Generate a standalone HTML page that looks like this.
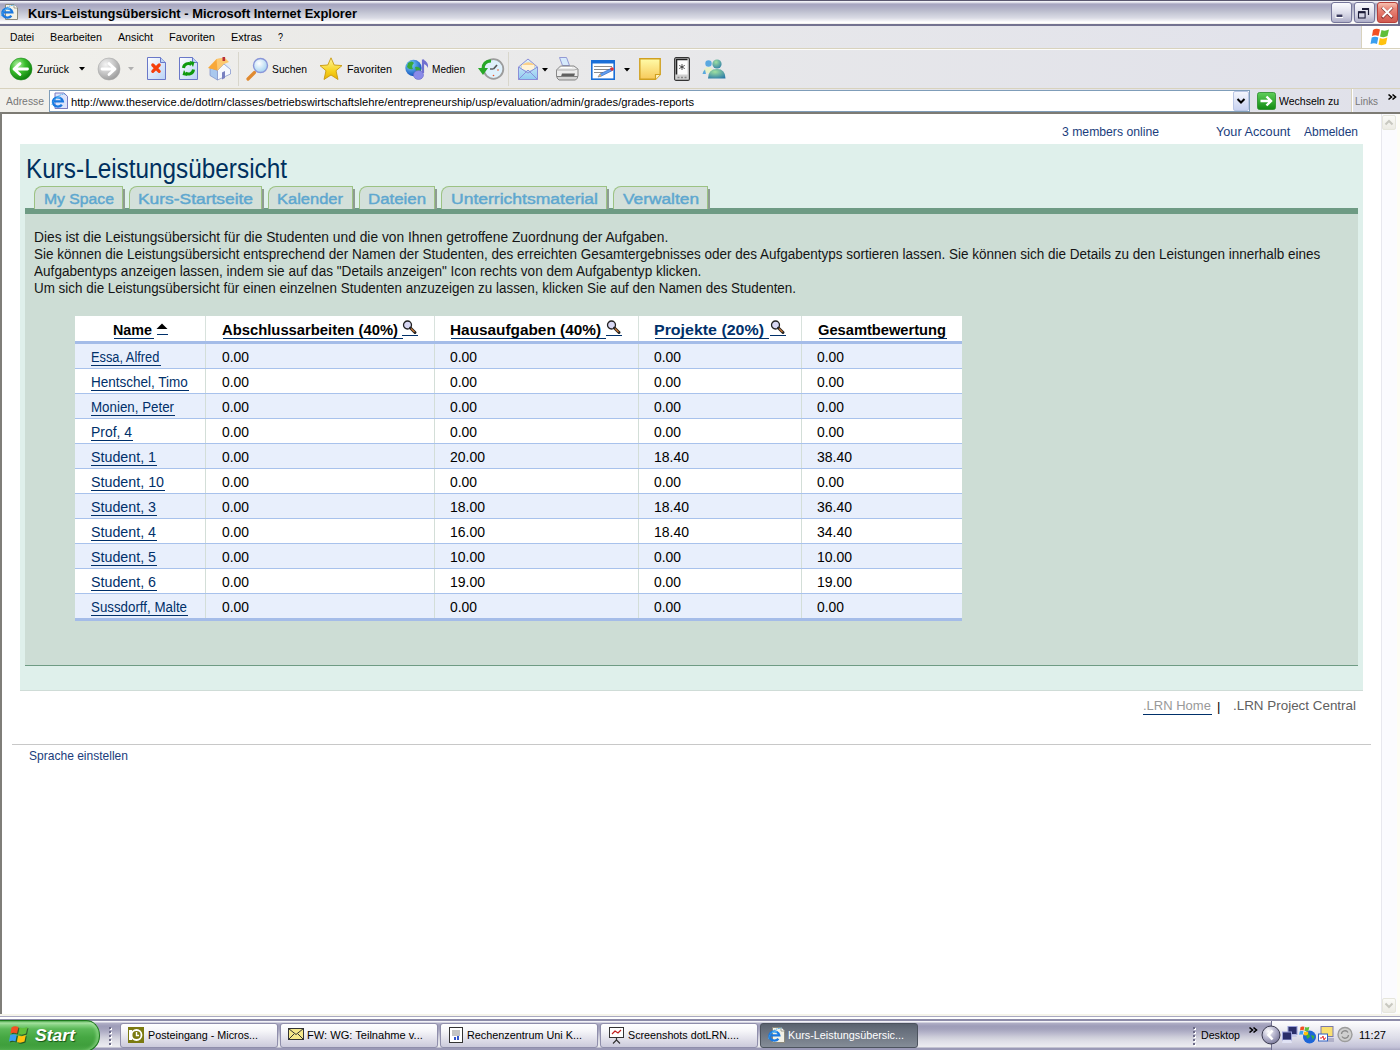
<!DOCTYPE html>
<html><head><meta charset="utf-8">
<title>Kurs-Leistungsübersicht</title>
<style>
*{margin:0;padding:0;box-sizing:border-box}
html,body{width:1400px;height:1050px;overflow:hidden;background:#fff;font-family:"Liberation Sans",sans-serif}
body{position:relative}
.a{position:absolute}
.t{position:absolute;white-space:nowrap}
svg{position:absolute;overflow:visible}
</style></head><body>
<div class="a" style="left:0;top:112px;width:1400px;height:904px;background:#fff"></div>
<div class="a" style="left:0;top:112px;width:1400px;height:2px;background:#7d7b74"></div>
<div class="a" style="left:0;top:112px;width:2px;height:904px;background:#7f7e79"></div>
<div class="a" style="left:20px;top:144px;width:1343px;height:547px;background:#dff0eb;border-bottom:1px solid #cfdcd7"></div>
<div class="a" style="left:25px;top:208px;width:1333px;height:6px;background:#6e9b84"></div>
<div class="a" style="left:25px;top:214px;width:1333px;height:452px;background:#cdddd5;border-bottom:1px solid #6e9b84"></div>
<div class="t" style="left:1062px;top:124.95px;font-size:13px;line-height:13px;color:#1a3d7c;transform:scaleX(0.9388);transform-origin:0 0;">3 members online</div>
<div class="t" style="left:1216px;top:124.95px;font-size:13px;line-height:13px;color:#1a3d7c;transform:scaleX(0.9759);transform-origin:0 0;">Your Account</div>
<div class="t" style="left:1304px;top:124.95px;font-size:13px;line-height:13px;color:#1a3d7c;transform:scaleX(0.9225);transform-origin:0 0;">Abmelden</div>
<div class="t" style="left:26px;top:154.62px;font-size:27.5px;line-height:27.5px;color:#00305f;transform:scaleX(0.8847);transform-origin:0 0;">Kurs-Leistungsübersicht</div>
<div class="a" style="left:34px;top:186px;width:89px;height:23px;background:#d3e0da;border:1px solid #9cc283;border-bottom:none;border-top-left-radius:8px"></div>
<div class="a" style="left:123px;top:189px;width:2px;height:20px;background:#8e9c92"></div>
<div class="t" style="left:44px;top:190.82px;font-size:15.5px;line-height:15.5px;color:#5ea7cf;transform:scaleX(1.0157);transform-origin:0 0;-webkit-text-stroke:0.45px #5ea7cf;">My Space</div>
<div class="a" style="left:129px;top:186px;width:133px;height:23px;background:#d3e0da;border:1px solid #9cc283;border-bottom:none;border-top-left-radius:8px"></div>
<div class="a" style="left:262px;top:189px;width:2px;height:20px;background:#8e9c92"></div>
<div class="t" style="left:138px;top:190.82px;font-size:15.5px;line-height:15.5px;color:#5ea7cf;transform:scaleX(1.1219);transform-origin:0 0;-webkit-text-stroke:0.45px #5ea7cf;">Kurs-Startseite</div>
<div class="a" style="left:268px;top:186px;width:85px;height:23px;background:#d3e0da;border:1px solid #9cc283;border-bottom:none;border-top-left-radius:8px"></div>
<div class="a" style="left:353px;top:189px;width:2px;height:20px;background:#8e9c92"></div>
<div class="t" style="left:277px;top:190.82px;font-size:15.5px;line-height:15.5px;color:#5ea7cf;transform:scaleX(1.0637);transform-origin:0 0;-webkit-text-stroke:0.45px #5ea7cf;">Kalender</div>
<div class="a" style="left:359px;top:186px;width:76px;height:23px;background:#d3e0da;border:1px solid #9cc283;border-bottom:none;border-top-left-radius:8px"></div>
<div class="a" style="left:435px;top:189px;width:2px;height:20px;background:#8e9c92"></div>
<div class="t" style="left:368px;top:190.82px;font-size:15.5px;line-height:15.5px;color:#5ea7cf;transform:scaleX(1.0856);transform-origin:0 0;-webkit-text-stroke:0.45px #5ea7cf;">Dateien</div>
<div class="a" style="left:441px;top:186px;width:166px;height:23px;background:#d3e0da;border:1px solid #9cc283;border-bottom:none;border-top-left-radius:8px"></div>
<div class="a" style="left:607px;top:189px;width:2px;height:20px;background:#8e9c92"></div>
<div class="t" style="left:451px;top:190.82px;font-size:15.5px;line-height:15.5px;color:#5ea7cf;transform:scaleX(1.1302);transform-origin:0 0;-webkit-text-stroke:0.45px #5ea7cf;">Unterrichtsmaterial</div>
<div class="a" style="left:613px;top:186px;width:95px;height:23px;background:#d3e0da;border:1px solid #9cc283;border-bottom:none;border-top-left-radius:8px"></div>
<div class="a" style="left:708px;top:189px;width:2px;height:20px;background:#8e9c92"></div>
<div class="t" style="left:623px;top:190.82px;font-size:15.5px;line-height:15.5px;color:#5ea7cf;transform:scaleX(1.1165);transform-origin:0 0;-webkit-text-stroke:0.45px #5ea7cf;">Verwalten</div>
<div class="t" style="left:34px;top:230.10px;font-size:14px;line-height:14px;color:#141414;transform:scaleX(0.9846);transform-origin:0 0;">Dies ist die Leistungsübersicht für die Studenten und die von Ihnen getroffene Zuordnung der Aufgaben.</div>
<div class="t" style="left:34px;top:247.10px;font-size:14px;line-height:14px;color:#141414;transform:scaleX(0.9637);transform-origin:0 0;">Sie können die Leistungsübersicht entsprechend der Namen der Studenten, des erreichten Gesamtergebnisses oder des Aufgabentyps sortieren lassen. Sie können sich die Details zu den Leistungen innerhalb eines</div>
<div class="t" style="left:34px;top:264.10px;font-size:14px;line-height:14px;color:#141414;transform:scaleX(0.9701);transform-origin:0 0;">Aufgabentyps anzeigen lassen, indem sie auf das &quot;Details anzeigen&quot; Icon rechts von dem Aufgabentyp klicken.</div>
<div class="t" style="left:34px;top:281.10px;font-size:14px;line-height:14px;color:#141414;transform:scaleX(0.9590);transform-origin:0 0;">Um sich die Leistungsübersicht für einen einzelnen Studenten anzuzeigen zu lassen, klicken Sie auf den Namen des Studenten.</div>
<div class="a" style="left:75px;top:316px;width:887px;height:25px;background:#fff"></div>
<div class="a" style="left:75px;top:341px;width:887px;height:3px;background:#a4bce8"></div>
<div class="a" style="left:75px;top:344px;width:887px;height:24px;background:#e8effc"></div>
<div class="a" style="left:75px;top:369px;width:887px;height:24px;background:#fff"></div>
<div class="a" style="left:75px;top:394px;width:887px;height:24px;background:#e8effc"></div>
<div class="a" style="left:75px;top:419px;width:887px;height:24px;background:#fff"></div>
<div class="a" style="left:75px;top:444px;width:887px;height:24px;background:#e8effc"></div>
<div class="a" style="left:75px;top:469px;width:887px;height:24px;background:#fff"></div>
<div class="a" style="left:75px;top:494px;width:887px;height:24px;background:#e8effc"></div>
<div class="a" style="left:75px;top:519px;width:887px;height:24px;background:#fff"></div>
<div class="a" style="left:75px;top:544px;width:887px;height:24px;background:#e8effc"></div>
<div class="a" style="left:75px;top:569px;width:887px;height:24px;background:#fff"></div>
<div class="a" style="left:75px;top:594px;width:887px;height:24px;background:#e8effc"></div>
<div class="a" style="left:205px;top:316px;width:1px;height:25px;background:#d8e2dd"></div>
<div class="a" style="left:205px;top:344px;width:1px;height:274px;background:#d3ded8"></div>
<div class="a" style="left:434px;top:316px;width:1px;height:25px;background:#d8e2dd"></div>
<div class="a" style="left:434px;top:344px;width:1px;height:274px;background:#d3ded8"></div>
<div class="a" style="left:638px;top:316px;width:1px;height:25px;background:#d8e2dd"></div>
<div class="a" style="left:638px;top:344px;width:1px;height:274px;background:#d3ded8"></div>
<div class="a" style="left:801px;top:316px;width:1px;height:25px;background:#d8e2dd"></div>
<div class="a" style="left:801px;top:344px;width:1px;height:274px;background:#d3ded8"></div>
<div class="a" style="left:75px;top:368px;width:887px;height:1px;background:#a8c2ec"></div>
<div class="a" style="left:75px;top:393px;width:887px;height:1px;background:#a8c2ec"></div>
<div class="a" style="left:75px;top:418px;width:887px;height:1px;background:#a8c2ec"></div>
<div class="a" style="left:75px;top:443px;width:887px;height:1px;background:#a8c2ec"></div>
<div class="a" style="left:75px;top:468px;width:887px;height:1px;background:#a8c2ec"></div>
<div class="a" style="left:75px;top:493px;width:887px;height:1px;background:#a8c2ec"></div>
<div class="a" style="left:75px;top:518px;width:887px;height:1px;background:#a8c2ec"></div>
<div class="a" style="left:75px;top:543px;width:887px;height:1px;background:#a8c2ec"></div>
<div class="a" style="left:75px;top:568px;width:887px;height:1px;background:#a8c2ec"></div>
<div class="a" style="left:75px;top:593px;width:887px;height:1px;background:#a8c2ec"></div>
<div class="a" style="left:75px;top:618px;width:887px;height:3px;background:#a4bce8"></div>
<div class="t" style="left:91px;top:350.10px;font-size:14px;line-height:14px;color:#00306a;transform:scaleX(0.9142);transform-origin:0 0;">Essa, Alfred</div>
<div class="a" style="left:91px;top:365px;width:70px;height:1px;background:#00306a"></div>
<div class="t" style="left:222px;top:350.10px;font-size:14px;line-height:14px;color:#000;transform:scaleX(0.9909);transform-origin:0 0;">0.00</div>
<div class="t" style="left:450px;top:350.10px;font-size:14px;line-height:14px;color:#000;transform:scaleX(0.9909);transform-origin:0 0;">0.00</div>
<div class="t" style="left:654px;top:350.10px;font-size:14px;line-height:14px;color:#000;transform:scaleX(0.9909);transform-origin:0 0;">0.00</div>
<div class="t" style="left:817px;top:350.10px;font-size:14px;line-height:14px;color:#000;transform:scaleX(0.9909);transform-origin:0 0;">0.00</div>
<div class="t" style="left:91px;top:375.10px;font-size:14px;line-height:14px;color:#00306a;transform:scaleX(0.9640);transform-origin:0 0;">Hentschel, Timo</div>
<div class="a" style="left:91px;top:390px;width:98px;height:1px;background:#00306a"></div>
<div class="t" style="left:222px;top:375.10px;font-size:14px;line-height:14px;color:#000;transform:scaleX(0.9909);transform-origin:0 0;">0.00</div>
<div class="t" style="left:450px;top:375.10px;font-size:14px;line-height:14px;color:#000;transform:scaleX(0.9909);transform-origin:0 0;">0.00</div>
<div class="t" style="left:654px;top:375.10px;font-size:14px;line-height:14px;color:#000;transform:scaleX(0.9909);transform-origin:0 0;">0.00</div>
<div class="t" style="left:817px;top:375.10px;font-size:14px;line-height:14px;color:#000;transform:scaleX(0.9909);transform-origin:0 0;">0.00</div>
<div class="t" style="left:91px;top:400.10px;font-size:14px;line-height:14px;color:#00306a;transform:scaleX(0.9523);transform-origin:0 0;">Monien, Peter</div>
<div class="a" style="left:91px;top:415px;width:84px;height:1px;background:#00306a"></div>
<div class="t" style="left:222px;top:400.10px;font-size:14px;line-height:14px;color:#000;transform:scaleX(0.9909);transform-origin:0 0;">0.00</div>
<div class="t" style="left:450px;top:400.10px;font-size:14px;line-height:14px;color:#000;transform:scaleX(0.9909);transform-origin:0 0;">0.00</div>
<div class="t" style="left:654px;top:400.10px;font-size:14px;line-height:14px;color:#000;transform:scaleX(0.9909);transform-origin:0 0;">0.00</div>
<div class="t" style="left:817px;top:400.10px;font-size:14px;line-height:14px;color:#000;transform:scaleX(0.9909);transform-origin:0 0;">0.00</div>
<div class="t" style="left:91px;top:425.10px;font-size:14px;line-height:14px;color:#00306a;transform:scaleX(0.9942);transform-origin:0 0;">Prof, 4</div>
<div class="a" style="left:91px;top:440px;width:42px;height:1px;background:#00306a"></div>
<div class="t" style="left:222px;top:425.10px;font-size:14px;line-height:14px;color:#000;transform:scaleX(0.9909);transform-origin:0 0;">0.00</div>
<div class="t" style="left:450px;top:425.10px;font-size:14px;line-height:14px;color:#000;transform:scaleX(0.9909);transform-origin:0 0;">0.00</div>
<div class="t" style="left:654px;top:425.10px;font-size:14px;line-height:14px;color:#000;transform:scaleX(0.9909);transform-origin:0 0;">0.00</div>
<div class="t" style="left:817px;top:425.10px;font-size:14px;line-height:14px;color:#000;transform:scaleX(0.9909);transform-origin:0 0;">0.00</div>
<div class="t" style="left:91px;top:450.10px;font-size:14px;line-height:14px;color:#00306a;transform:scaleX(1.0184);transform-origin:0 0;">Student, 1</div>
<div class="a" style="left:91px;top:465px;width:66px;height:1px;background:#00306a"></div>
<div class="t" style="left:222px;top:450.10px;font-size:14px;line-height:14px;color:#000;transform:scaleX(0.9909);transform-origin:0 0;">0.00</div>
<div class="t" style="left:450px;top:450.10px;font-size:14px;line-height:14px;color:#000;">20.00</div>
<div class="t" style="left:654px;top:450.10px;font-size:14px;line-height:14px;color:#000;">18.40</div>
<div class="t" style="left:817px;top:450.10px;font-size:14px;line-height:14px;color:#000;">38.40</div>
<div class="t" style="left:91px;top:475.10px;font-size:14px;line-height:14px;color:#00306a;transform:scaleX(1.0194);transform-origin:0 0;">Student, 10</div>
<div class="a" style="left:91px;top:490px;width:74px;height:1px;background:#00306a"></div>
<div class="t" style="left:222px;top:475.10px;font-size:14px;line-height:14px;color:#000;transform:scaleX(0.9909);transform-origin:0 0;">0.00</div>
<div class="t" style="left:450px;top:475.10px;font-size:14px;line-height:14px;color:#000;transform:scaleX(0.9909);transform-origin:0 0;">0.00</div>
<div class="t" style="left:654px;top:475.10px;font-size:14px;line-height:14px;color:#000;transform:scaleX(0.9909);transform-origin:0 0;">0.00</div>
<div class="t" style="left:817px;top:475.10px;font-size:14px;line-height:14px;color:#000;transform:scaleX(0.9909);transform-origin:0 0;">0.00</div>
<div class="t" style="left:91px;top:500.10px;font-size:14px;line-height:14px;color:#00306a;transform:scaleX(1.0184);transform-origin:0 0;">Student, 3</div>
<div class="a" style="left:91px;top:515px;width:66px;height:1px;background:#00306a"></div>
<div class="t" style="left:222px;top:500.10px;font-size:14px;line-height:14px;color:#000;transform:scaleX(0.9909);transform-origin:0 0;">0.00</div>
<div class="t" style="left:450px;top:500.10px;font-size:14px;line-height:14px;color:#000;">18.00</div>
<div class="t" style="left:654px;top:500.10px;font-size:14px;line-height:14px;color:#000;">18.40</div>
<div class="t" style="left:817px;top:500.10px;font-size:14px;line-height:14px;color:#000;">36.40</div>
<div class="t" style="left:91px;top:525.10px;font-size:14px;line-height:14px;color:#00306a;transform:scaleX(1.0184);transform-origin:0 0;">Student, 4</div>
<div class="a" style="left:91px;top:540px;width:66px;height:1px;background:#00306a"></div>
<div class="t" style="left:222px;top:525.10px;font-size:14px;line-height:14px;color:#000;transform:scaleX(0.9909);transform-origin:0 0;">0.00</div>
<div class="t" style="left:450px;top:525.10px;font-size:14px;line-height:14px;color:#000;">16.00</div>
<div class="t" style="left:654px;top:525.10px;font-size:14px;line-height:14px;color:#000;">18.40</div>
<div class="t" style="left:817px;top:525.10px;font-size:14px;line-height:14px;color:#000;">34.40</div>
<div class="t" style="left:91px;top:550.10px;font-size:14px;line-height:14px;color:#00306a;transform:scaleX(1.0184);transform-origin:0 0;">Student, 5</div>
<div class="a" style="left:91px;top:565px;width:66px;height:1px;background:#00306a"></div>
<div class="t" style="left:222px;top:550.10px;font-size:14px;line-height:14px;color:#000;transform:scaleX(0.9909);transform-origin:0 0;">0.00</div>
<div class="t" style="left:450px;top:550.10px;font-size:14px;line-height:14px;color:#000;">10.00</div>
<div class="t" style="left:654px;top:550.10px;font-size:14px;line-height:14px;color:#000;transform:scaleX(0.9909);transform-origin:0 0;">0.00</div>
<div class="t" style="left:817px;top:550.10px;font-size:14px;line-height:14px;color:#000;">10.00</div>
<div class="t" style="left:91px;top:575.10px;font-size:14px;line-height:14px;color:#00306a;transform:scaleX(1.0184);transform-origin:0 0;">Student, 6</div>
<div class="a" style="left:91px;top:590px;width:66px;height:1px;background:#00306a"></div>
<div class="t" style="left:222px;top:575.10px;font-size:14px;line-height:14px;color:#000;transform:scaleX(0.9909);transform-origin:0 0;">0.00</div>
<div class="t" style="left:450px;top:575.10px;font-size:14px;line-height:14px;color:#000;">19.00</div>
<div class="t" style="left:654px;top:575.10px;font-size:14px;line-height:14px;color:#000;transform:scaleX(0.9909);transform-origin:0 0;">0.00</div>
<div class="t" style="left:817px;top:575.10px;font-size:14px;line-height:14px;color:#000;">19.00</div>
<div class="t" style="left:91px;top:600.10px;font-size:14px;line-height:14px;color:#00306a;transform:scaleX(0.9515);transform-origin:0 0;">Sussdorff, Malte</div>
<div class="a" style="left:91px;top:615px;width:97px;height:1px;background:#00306a"></div>
<div class="t" style="left:222px;top:600.10px;font-size:14px;line-height:14px;color:#000;transform:scaleX(0.9909);transform-origin:0 0;">0.00</div>
<div class="t" style="left:450px;top:600.10px;font-size:14px;line-height:14px;color:#000;transform:scaleX(0.9909);transform-origin:0 0;">0.00</div>
<div class="t" style="left:654px;top:600.10px;font-size:14px;line-height:14px;color:#000;transform:scaleX(0.9909);transform-origin:0 0;">0.00</div>
<div class="t" style="left:817px;top:600.10px;font-size:14px;line-height:14px;color:#000;transform:scaleX(0.9909);transform-origin:0 0;">0.00</div>
<div class="t" style="left:113px;top:323.10px;font-size:14px;line-height:14px;color:#000;font-weight:bold;transform:scaleX(1.0228);transform-origin:0 0;">Name</div>
<div class="a" style="left:114px;top:338px;width:40px;height:1px;background:#00306a"></div>
<svg style="left:157px;top:323px" width="11" height="13" viewBox="0 0 11 13"><path d="M5 0.5 L10.5 6 H-0.5 Z" fill="#000"/><rect x="0" y="11" width="11" height="1" fill="#00306a"/></svg>
<div class="t" style="left:222px;top:323.10px;font-size:14px;line-height:14px;color:#000;font-weight:bold;transform:scaleX(1.0571);transform-origin:0 0;">Abschlussarbeiten (40%)</div>
<div class="a" style="left:223px;top:338px;width:180px;height:1px;background:#00306a"></div>
<svg style="left:402px;top:320px" width="16" height="16" viewBox="0 0 16 16"><circle cx="5.5" cy="5" r="4" fill="#d8d8f4" stroke="#222" stroke-width="1.3"/><path d="M8.5 8 L13 12.5" stroke="#222" stroke-width="3" stroke-linecap="round"/><path d="M9 8.5 L12.5 12" stroke="#c07030" stroke-width="1.4"/><rect x="0" y="15" width="16" height="1" fill="#00306a"/></svg>
<div class="t" style="left:450px;top:323.10px;font-size:14px;line-height:14px;color:#000;font-weight:bold;transform:scaleX(1.0966);transform-origin:0 0;">Hausaufgaben (40%)</div>
<div class="a" style="left:451px;top:338px;width:155px;height:1px;background:#00306a"></div>
<svg style="left:606px;top:320px" width="16" height="16" viewBox="0 0 16 16"><circle cx="5.5" cy="5" r="4" fill="#d8d8f4" stroke="#222" stroke-width="1.3"/><path d="M8.5 8 L13 12.5" stroke="#222" stroke-width="3" stroke-linecap="round"/><path d="M9 8.5 L12.5 12" stroke="#c07030" stroke-width="1.4"/><rect x="0" y="15" width="16" height="1" fill="#00306a"/></svg>
<div class="t" style="left:654px;top:323.10px;font-size:14px;line-height:14px;color:#00306a;font-weight:bold;transform:scaleX(1.1401);transform-origin:0 0;">Projekte (20%)</div>
<div class="a" style="left:655px;top:338px;width:114px;height:1px;background:#00306a"></div>
<svg style="left:770px;top:320px" width="16" height="16" viewBox="0 0 16 16"><circle cx="5.5" cy="5" r="4" fill="#d8d8f4" stroke="#222" stroke-width="1.3"/><path d="M8.5 8 L13 12.5" stroke="#222" stroke-width="3" stroke-linecap="round"/><path d="M9 8.5 L12.5 12" stroke="#c07030" stroke-width="1.4"/><rect x="0" y="15" width="16" height="1" fill="#00306a"/></svg>
<div class="t" style="left:818px;top:323.10px;font-size:14px;line-height:14px;color:#000;font-weight:bold;transform:scaleX(1.0480);transform-origin:0 0;">Gesamtbewertung</div>
<div class="a" style="left:819px;top:338px;width:128px;height:1px;background:#00306a"></div>
<div class="t" style="left:1143px;top:698.95px;font-size:13px;line-height:13px;color:#999;">.LRN Home</div>
<div class="a" style="left:1143px;top:714px;width:69px;height:1px;background:#00306a"></div>
<div class="t" style="left:1217px;top:699.95px;font-size:13px;line-height:13px;color:#000;">|</div>
<div class="t" style="left:1233px;top:698.95px;font-size:13px;line-height:13px;color:#606060;transform:scaleX(1.0318);transform-origin:0 0;">.LRN Project Central</div>
<div class="a" style="left:12px;top:744px;width:1359px;height:1px;background:#c8c8c8"></div>
<div class="t" style="left:29px;top:748.95px;font-size:13px;line-height:13px;color:#1a3d7c;transform:scaleX(0.9256);transform-origin:0 0;">Sprache einstellen</div>
<div class="a" style="left:1381px;top:114px;width:17px;height:900px;background:#fbfbfe;border-left:1px solid #e8e8ee;border-right:1px solid #ebebf0"></div>
<div class="a" style="left:1397px;top:114px;width:3px;height:902px;background:#fdfdf5"></div>
<div class="a" style="left:0px;top:1014px;width:1400px;height:2px;background:#f5f4ea"></div>
<div class="a" style="left:0;top:0;width:1400px;height:26px;background:linear-gradient(#5a5870 0,#5a5870 1px,#f0f0f6 1px,#f0f0f6 2px,#a6a5c0 4px,#aaa9c3 6px,#b8b9cb 10px,#c9cbd8 14px,#dadbe5 18px,#f4f4f7 21px,#fff 22px,#fff 23px,#e8e6e0 24px,#737290 24px,#737290 26px)"></div>
<div class="a" style="left:1398px;top:0;width:2px;height:26px;background:#6a6988"></div>
<div class="t" style="left:28px;top:6.95px;font-size:13px;line-height:13px;color:#000;font-weight:bold;transform:scaleX(0.9923);transform-origin:0 0;">Kurs-Leistungsübersicht - Microsoft Internet Explorer</div>
<div class="a" style="left:0;top:26px;width:1361px;height:22px;background:linear-gradient(90deg,#eeede6,#e9e9ea 40%,#e1e2eb)"></div>
<div class="a" style="left:1361px;top:26px;width:39px;height:22px;background:#fff;border-left:1px solid #d8d2bd"></div>
<div class="a" style="left:0;top:48px;width:1400px;height:1px;background:#d8d2bd"></div>
<div class="t" style="left:10px;top:31.65px;font-size:11px;line-height:11px;color:#000;transform:scaleX(0.9346);transform-origin:0 0;">Datei</div>
<div class="t" style="left:50px;top:31.65px;font-size:11px;line-height:11px;color:#000;transform:scaleX(0.9773);transform-origin:0 0;">Bearbeiten</div>
<div class="t" style="left:118px;top:31.65px;font-size:11px;line-height:11px;color:#000;transform:scaleX(0.9703);transform-origin:0 0;">Ansicht</div>
<div class="t" style="left:169px;top:31.65px;font-size:11px;line-height:11px;color:#000;transform:scaleX(1.0032);transform-origin:0 0;">Favoriten</div>
<div class="t" style="left:231px;top:31.65px;font-size:11px;line-height:11px;color:#000;transform:scaleX(0.9944);transform-origin:0 0;">Extras</div>
<div class="t" style="left:278px;top:31.65px;font-size:11px;line-height:11px;color:#000;transform:scaleX(0.8173);transform-origin:0 0;">?</div>
<div class="a" style="left:0;top:49px;width:1400px;height:39px;background:linear-gradient(90deg,#f1f0eb,#e9e9ea 40%,#e0e1ea)"></div>
<div class="a" style="left:0;top:88px;width:1400px;height:1px;background:#d8d2bd"></div>
<div class="a" style="left:0;top:49px;width:1400px;height:1px;background:#fdfdfb"></div>
<div class="t" style="left:37px;top:63.65px;font-size:11px;line-height:11px;color:#000;transform:scaleX(0.9519);transform-origin:0 0;">Zurück</div>
<div class="t" style="left:272px;top:63.65px;font-size:11px;line-height:11px;color:#000;transform:scaleX(0.9381);transform-origin:0 0;">Suchen</div>
<div class="t" style="left:347px;top:63.65px;font-size:11px;line-height:11px;color:#000;transform:scaleX(0.9814);transform-origin:0 0;">Favoriten</div>
<div class="t" style="left:432px;top:63.65px;font-size:11px;line-height:11px;color:#000;transform:scaleX(0.9147);transform-origin:0 0;">Medien</div>
<div class="a" style="left:0;top:89px;width:1400px;height:23px;background:linear-gradient(90deg,#f1f0eb,#e9e9ea 40%,#e0e1ea)"></div>
<div class="t" style="left:6px;top:95.65px;font-size:11px;line-height:11px;color:#777;transform:scaleX(0.9417);transform-origin:0 0;">Adresse</div>
<div class="a" style="left:49px;top:90px;width:1201px;height:22px;background:#fff;border:1px solid #7f9db9"></div>
<div class="t" style="left:71px;top:96.65px;font-size:11px;line-height:11px;color:#000;transform:scaleX(1.0169);transform-origin:0 0;">http://www.theservice.de/dotlrn/classes/betriebswirtschaftslehre/entrepreneurship/usp/evaluation/admin/grades/grades-reports</div>
<div class="t" style="left:1279px;top:95.65px;font-size:11px;line-height:11px;color:#000;transform:scaleX(0.9558);transform-origin:0 0;">Wechseln zu</div>
<div class="t" style="left:1355px;top:95.65px;font-size:11px;line-height:11px;color:#777;transform:scaleX(0.8957);transform-origin:0 0;">Links</div>
<div class="a" style="left:0;top:1016px;width:1400px;height:34px;background:linear-gradient(#a9a8c0 0,#a9a8c0 1px,#fff 1px,#fff 3px,#8d8ca9 3px,#8d8ca9 5px,#f4f4f8 5px,#f4f4f8 6px,#b0afc6 7px,#9e9db9 10px,#a3a2bc 13px,#b7b6cb 17px,#cdcdd9 21px,#dedee6 25px,#e8e8ee 29px,#ececee 31px,#9a99b6 32px,#9a99b6 34px)"></div>
<svg width="0" height="0" style="position:absolute"><defs>
<radialGradient id="gGreen" cx="0.35" cy="0.3" r="0.75"><stop offset="0" stop-color="#b6f0a8"/><stop offset="0.45" stop-color="#3cbf2e"/><stop offset="1" stop-color="#0b7d0b"/></radialGradient>
<radialGradient id="gGray" cx="0.35" cy="0.3" r="0.75"><stop offset="0" stop-color="#f4f4f4"/><stop offset="0.5" stop-color="#c9c9c9"/><stop offset="1" stop-color="#9a9a9a"/></radialGradient>
<linearGradient id="gPage" x1="0" y1="0" x2="1" y2="1"><stop offset="0" stop-color="#ffffff"/><stop offset="1" stop-color="#b9d3f6"/></linearGradient>
<radialGradient id="gLens" cx="0.4" cy="0.35" r="0.7"><stop offset="0" stop-color="#ffffff"/><stop offset="1" stop-color="#9fd0f0"/></radialGradient>
<linearGradient id="gStar" x1="0" y1="0" x2="0" y2="1"><stop offset="0" stop-color="#fff7a0"/><stop offset="0.6" stop-color="#f7d320"/><stop offset="1" stop-color="#e8b000"/></linearGradient>
<radialGradient id="gGlobe" cx="0.35" cy="0.3" r="0.75"><stop offset="0" stop-color="#7fd6ff"/><stop offset="1" stop-color="#0a48b8"/></radialGradient>
<linearGradient id="gNote" x1="0" y1="0" x2="0" y2="1"><stop offset="0" stop-color="#fffca8"/><stop offset="1" stop-color="#f7c95a"/></linearGradient>
<linearGradient id="gEnv" x1="0" y1="0" x2="0" y2="1"><stop offset="0" stop-color="#e2f2fb"/><stop offset="1" stop-color="#8ecbf0"/></linearGradient>
<linearGradient id="gGo" x1="0" y1="0" x2="0" y2="1"><stop offset="0" stop-color="#5fcf5a"/><stop offset="1" stop-color="#118a11"/></linearGradient>
<linearGradient id="gStart" x1="0" y1="0" x2="0" y2="1"><stop offset="0" stop-color="#4fa84f"/><stop offset="0.1" stop-color="#a4dba2"/><stop offset="0.3" stop-color="#5ebb5a"/><stop offset="0.7" stop-color="#3a9a38"/><stop offset="1" stop-color="#2f8a2d"/></linearGradient>
<radialGradient id="gPerson" cx="0.4" cy="0.3" r="0.8"><stop offset="0" stop-color="#9fe0a0"/><stop offset="1" stop-color="#2a7aa8"/></radialGradient>
</defs></svg>
<svg style="left:9px;top:58px" width="24" height="24" viewBox="0 0 24 24"><circle cx="12" cy="11" r="11" fill="url(#gGreen)" stroke="#1d8a1d" stroke-width="0.6"/><path d="M5 11 L11 5.5 M5 11 L11 16.5 M5.5 11 H18.5" stroke="#fff" stroke-width="2.8" stroke-linecap="round" fill="none"/></svg>
<svg style="left:79px;top:67px" width="6" height="4" viewBox="0 0 6 4"><path d="M0 0 H6 L3 3.5 Z" fill="#000"/></svg>
<svg style="left:98px;top:58px" width="24" height="24" viewBox="0 0 24 24"><circle cx="11" cy="11" r="11" fill="url(#gGray)" stroke="#a8a8a8" stroke-width="0.6"/><path d="M17 11 L11 5.5 M17 11 L11 16.5 M16.5 11 H4" stroke="#fff" stroke-width="2.8" stroke-linecap="round" fill="none"/></svg>
<svg style="left:128px;top:67px" width="6" height="4" viewBox="0 0 6 4"><path d="M0 0 H6 L3 3.5 Z" fill="#b0b0b0"/></svg>
<svg style="left:147px;top:57px" width="20" height="24" viewBox="0 0 20 24"><path d="M0.5 0.5 H13.5 L18.5 5.5 V22.5 H0.5 Z" fill="url(#gPage)" stroke="#6a78c8" stroke-width="1"/><path d="M13.5 0.5 V5.5 H18.5" fill="#bcd4f5" stroke="#6a78c8" stroke-width="1"/><path d="M5.8 8 L12.2 14.4 M12.2 8 L5.8 14.4" stroke="#f5400e" stroke-width="3.2" stroke-linecap="round"/></svg>
<svg style="left:179px;top:57px" width="20" height="24" viewBox="0 0 20 24"><path d="M0.5 0.5 H13.5 L18.5 5.5 V22.5 H0.5 Z" fill="url(#gPage)" stroke="#6a78c8" stroke-width="1"/><path d="M13.5 0.5 V5.5 H18.5" fill="#bcd4f5" stroke="#6a78c8" stroke-width="1"/><path d="M4.5 11 A5 5 0 0 1 12.5 7.5" stroke="#0f9a0f" stroke-width="3" fill="none"/><path d="M10.5 4 L15.5 5 L14 10 Z" fill="#0f9a0f"/><path d="M14.5 12.5 A5 5 0 0 1 6.5 16" stroke="#0f9a0f" stroke-width="3" fill="none"/><path d="M8.5 19 L3.5 18 L5 13 Z" fill="#0f9a0f"/></svg>
<svg style="left:208px;top:57px" width="24" height="24" viewBox="0 0 24 24"><path d="M2 10.5 V18.5 L9.5 23 L22.5 17 V9.5 L15 3 Z" fill="#dfe9f8"/><path d="M2 10.5 V18.5 L9.5 23 V13.5 Z" fill="#a9c8ee" stroke="#7b8ec8" stroke-width="0.7"/><path d="M9.5 13.5 L16 7 L22.5 12.5 V17 L9.5 23 Z" fill="#f6f9fe" stroke="#7b8ec8" stroke-width="0.7"/><path d="M0 11 L8.5 2 L17 1 L9.5 13.5 Z" fill="#f8a838"/><path d="M8.5 2 L17 1 L21 5 L16 7 L9.5 13.5 Z" fill="#fcc870"/><rect x="14.5" y="0" width="2.6" height="4" fill="#b83038"/><path d="M14 15.5 L17 14 V21 L14 22.5 Z" fill="#7880c0"/></svg>
<div class="a" style="left:238px;top:52px;width:1px;height:34px;background:#d8d6cc"></div>
<svg style="left:245px;top:57px" width="24" height="24" viewBox="0 0 24 24"><path d="M3 22 L9.5 15.5" stroke="#e08a30" stroke-width="3.2" stroke-linecap="round"/><circle cx="15.5" cy="8.5" r="7" fill="url(#gLens)" stroke="#8a96d8" stroke-width="1.4"/></svg>
<svg style="left:319px;top:57px" width="24" height="24" viewBox="0 0 24 24"><path d="M12 0.8 L15.2 8 L23 8.6 L17 13.7 L19 22.5 L12 18 L5 22.5 L7 13.7 L1 8.6 L8.8 8 Z" fill="url(#gStar)" stroke="#c89a10" stroke-width="0.9" stroke-linejoin="round"/></svg>
<svg style="left:404px;top:58px" width="26" height="24" viewBox="0 0 26 24"><circle cx="9.5" cy="10" r="8.2" fill="url(#gGlobe)"/><path d="M4 5 Q8 2 10 5 Q7 8 9 11 Q5 12 3 9 Z M11 9 Q15 8 17 12 Q14 14 12 13 Z" fill="#3aa83a"/><path d="M19 1.5 V15" stroke="#7070d0" stroke-width="2.2"/><path d="M19 1.5 Q25 4 24 10 Q22 6 19 6 Z" fill="#7070d0"/><ellipse cx="14.5" cy="17" rx="5" ry="4.5" fill="#8a8ae8" stroke="#6a6ac8" stroke-width="0.6"/></svg>
<svg style="left:477px;top:58px" width="26" height="24" viewBox="0 0 26 24"><circle cx="16.5" cy="11" r="9.8" fill="#dff0fb" stroke="#9c9c9c" stroke-width="1.8"/><path d="M16.5 11 L20 7" stroke="#555" stroke-width="1.6"/><path d="M16.5 11 H13" stroke="#555" stroke-width="1.4"/><circle cx="21" cy="12" r="0.8" fill="#f05020"/><circle cx="16.5" cy="17.5" r="0.8" fill="#f05020"/><path d="M14 3 Q6 3 6 11" stroke="#27a827" stroke-width="3" fill="none"/><path d="M1 10 L11 10 L6 17 Z" fill="#27a827"/></svg>
<div class="a" style="left:508px;top:52px;width:1px;height:34px;background:#d8d6cc"></div>
<svg style="left:518px;top:58px" width="21" height="23" viewBox="0 0 21 23"><path d="M0.5 9 L10 1 L19.5 9 V21.5 H0.5 Z" fill="url(#gEnv)" stroke="#8a8ed8" stroke-width="1"/><path d="M3 8 Q10 1 17 7 L16 10 L4 10 Z" fill="#fbd08a"/><path d="M4 7 H16 V11 L10 13 L4 11 Z" fill="#fff3d8"/><path d="M0.5 21.5 L10 12 L19.5 21.5 M0.5 9 L10 15 L19.5 9" stroke="#8a8ed8" stroke-width="1" fill="none"/></svg>
<svg style="left:542px;top:68px" width="6" height="4" viewBox="0 0 6 4"><path d="M0 0 H6 L3 3.5 Z" fill="#000"/></svg>
<svg style="left:556px;top:57px" width="23" height="24" viewBox="0 0 23 24"><path d="M3.5 0.5 H10.5 L13.5 8.5 H6.5 Z" fill="#d6eafc" stroke="#8a90d0" stroke-width="0.9"/><path d="M0.5 13 L4.5 9 H18 L22 12 V19.5 H0.5 Z" fill="#ececec" stroke="#7c7c7c" stroke-width="0.9"/><path d="M0.5 13 H18 L22 12" stroke="#a8a8a8" stroke-width="0.9" fill="none"/><path d="M5 10.5 H16" stroke="#fff" stroke-width="1"/><path d="M6 16.5 H19 L18 19.5 H5 Z" fill="#5f5f5f"/><path d="M1 19.5 H21.5 V21 L19.5 23 H3 L1 21 Z" fill="#d4d4d4" stroke="#7c7c7c" stroke-width="0.9"/></svg>
<svg style="left:591px;top:60px" width="24" height="20" viewBox="0 0 24 20"><rect x="0.8" y="0.8" width="22.4" height="18.4" fill="#fff" stroke="#1a6fd8" stroke-width="1.6"/><rect x="0" y="0" width="24" height="3.5" fill="#1a6fd8"/><path d="M3 6.5 H21 M3 9.5 H21 M3 12.5 H12" stroke="#7f7f7f" stroke-width="0.9"/><path d="M7 17 L9 14 L20 8.5 L21.5 10.5 L10.5 16 Z" fill="#5fa0f0" stroke="#2a5ab8" stroke-width="0.6"/><circle cx="21" cy="9" r="1.8" fill="#e03030"/><path d="M7 17 L9 14 L10.5 16 Z" fill="#e8b060"/></svg>
<svg style="left:624px;top:68px" width="6" height="4" viewBox="0 0 6 4"><path d="M0 0 H6 L3 3.5 Z" fill="#000"/></svg>
<svg style="left:639px;top:58px" width="23" height="23" viewBox="0 0 23 23"><path d="M0.8 0.8 H21.2 V16.5 L16.5 21.2 H0.8 Z" fill="url(#gNote)" stroke="#d0a020" stroke-width="1.4"/><path d="M16.5 21.2 V16.5 H21.2" fill="#fff6c8" stroke="#d0a020" stroke-width="1.2"/></svg>
<svg style="left:674px;top:57px" width="16" height="24" viewBox="0 0 16 24"><rect x="0.6" y="0.6" width="14.8" height="22.8" rx="1.5" fill="#d0d0d0" stroke="#333" stroke-width="1.1"/><rect x="2.5" y="2.5" width="11" height="15" fill="#fdfdfd"/><path d="M2.5 17.5 V2.5 H13.5" stroke="#222" stroke-width="1.6" fill="none"/><path d="M8 7 V13 M5.2 8.4 L10.8 11.6 M5.2 11.6 L10.8 8.4" stroke="#222" stroke-width="0.75"/><path d="M3.5 20.5 H12.5" stroke="#888" stroke-width="1.6" stroke-dasharray="2 1.5"/></svg>
<svg style="left:702px;top:59px" width="24" height="20" viewBox="0 0 24 20"><circle cx="6.5" cy="4.5" r="3.2" fill="#5aa8e0"/><path d="M0.5 15 Q1.5 8 6.5 8 Q10.5 8 11.5 13 Z" fill="#e8f0c8"/><path d="M0.5 15 Q1 12 3 10.5 L4 15 Z" fill="#5aa8e0"/><circle cx="15" cy="5" r="4.6" fill="url(#gPerson)"/><path d="M6 19.5 Q6 10 15 10 Q23.5 10 23.5 19.5 Z" fill="url(#gPerson)"/></svg>
<svg style="left:0px;top:4px" width="19" height="18" viewBox="0 0 19 18"><path d="M5.5 0.5 H14 L17.5 4 V15.5 H5.5 Z" fill="#f3f1e6" stroke="#8c8a7c" stroke-width="1"/><path d="M14 0.5 V4 H17.5" fill="#fff" stroke="#8c8a7c" stroke-width="0.8"/><g transform="translate(1,-0.5)"><path d="M1.5 8.8 H11.3 A5 4.6 0 1 0 10.4 12.2" stroke="#1a78e0" stroke-width="2.3" fill="none"/><path d="M4 6.5 A4 3 0 0 1 9 5.5" stroke="#6fd0ff" stroke-width="0.9" fill="none"/><path d="M0.5 12.5 Q3 2.5 13.5 1.5" stroke="#40a8f0" stroke-width="1" fill="none" stroke-dasharray="1.6 0.9"/></g></svg>
<div class="a" style="left:1331px;top:2px;width:21px;height:21px;border-radius:3px;border:1px solid #76769a;background:linear-gradient(#fbfbfe,#e8e8f2 35%,#cfcfe0 70%,#aeaec8)"></div>
<svg style="left:1331px;top:2px" width="21" height="21" viewBox="0 0 21 21"><path d="M4.5 12.5 H12 V16 H4.5 Z" fill="#fff"/><path d="M5.5 12.5 H11.5 V15 H5.5 Z" fill="#3e3e62"/></svg>
<div class="a" style="left:1354px;top:2px;width:21px;height:21px;border-radius:3px;border:1px solid #76769a;background:linear-gradient(#fbfbfe,#e8e8f2 35%,#cfcfe0 70%,#aeaec8)"></div>
<svg style="left:1354px;top:2px" width="21" height="21" viewBox="0 0 21 21"><path d="M8 6.5 H14.5 V13" stroke="#1c1c38" stroke-width="1.2" fill="none"/><path d="M8 7 H14.5" stroke="#1c1c38" stroke-width="2"/><rect x="4.5" y="9.8" width="6.6" height="6.2" fill="none" stroke="#1c1c38" stroke-width="1.1"/><path d="M4.5 10.3 H11.1" stroke="#1c1c38" stroke-width="2"/></svg>
<div class="a" style="left:1377px;top:2px;width:21px;height:21px;border-radius:3px;border:1px solid #b8403a;background:linear-gradient(#f6c0b0,#ea8a7c 30%,#de6a5e 70%,#d05a50)"></div>
<svg style="left:1377px;top:2px" width="21" height="21" viewBox="0 0 21 21"><path d="M5 5.5 L15.5 16 M15.5 5.5 L5 16" stroke="#5a1a1a" stroke-width="2.8" opacity="0.7"/><path d="M5.5 5.5 L15 15 M15 5.5 L5.5 15" stroke="#fff" stroke-width="2"/></svg>
<svg style="left:1372px;top:28px" width="19" height="18" viewBox="0 0 19 18"><path d="M1 2 Q4 0 8 1.5 L6.5 8 Q3 6.5 0 8 Z" fill="#f25022"/><path d="M9.5 2 Q13 3.5 17 1.5 L15.5 8 Q12 10 8 8.5 Z" fill="#5fbf3a"/><path d="M-0.3 9.5 Q3 8 6.3 9.5 L5 16 Q2 14.5 -1.5 16 Z" fill="#3a9ff0"/><path d="M7.8 10 Q11.5 11.5 15.3 9.5 L14 16 Q10 18 6.5 16.5 Z" fill="#ffc20e"/></svg>
<svg style="left:51px;top:92px" width="18" height="18" viewBox="0 0 18 18"><path d="M5 1.5 H14 L17 4.5 V17 H5 Z" fill="#6a6a90" opacity="0.6"/><path d="M4 1 H13 L16.5 4.5 V16.5 H4 Z" fill="#dde4fb" stroke="#7b7bc0" stroke-width="1"/><g transform="translate(0.5,0.5)"><path d="M1.5 8.8 H11.3 A5 4.6 0 1 0 10.4 12.2" stroke="#1a78e0" stroke-width="2.3" fill="none"/><path d="M4 6.5 A4 3 0 0 1 9 5.5" stroke="#6fd0ff" stroke-width="0.9" fill="none"/><path d="M0.5 12.5 Q3 2.5 13.5 1.5" stroke="#40a8f0" stroke-width="1" fill="none" stroke-dasharray="1.6 0.9"/></g></svg>
<div class="a" style="left:1233px;top:91px;width:16px;height:20px;border:1px solid #b9c6e5;border-radius:2px;background:linear-gradient(#f4f6fd,#c8d2f0)"></div>
<svg style="left:1233px;top:91px" width="16" height="20" viewBox="0 0 16 20"><path d="M4.5 8 L8 11.5 L11.5 8" stroke="#000" stroke-width="2" fill="none"/></svg>
<svg style="left:1257px;top:92px" width="19" height="18" viewBox="0 0 19 18"><rect x="0.5" y="0.5" width="18" height="17" rx="2" fill="url(#gGo)" stroke="#2a8a2a" stroke-width="0.8"/><path d="M3.5 9 H14 M9.5 4.5 L14 9 L9.5 13.5" stroke="#fff" stroke-width="2.4" fill="none"/></svg>
<div class="a" style="left:1351px;top:89px;width:1px;height:23px;background:#d8d2bd"></div>
<div class="a" style="left:1352px;top:89px;width:1px;height:23px;background:#fff"></div>
<svg style="left:1388px;top:94px" width="9" height="7" viewBox="0 0 9 7"><path d="M0.5 0.5 L3.5 3 L0.5 5.5 M4.5 0.5 L7.5 3 L4.5 5.5" stroke="#000" stroke-width="1.6" fill="none"/></svg>
<div class="a" style="left:1382px;top:115px;width:14px;height:15px;border:1px solid #e6e6dc;border-radius:2px;background:linear-gradient(#fbfbf8,#ecebe4)"></div>
<svg style="left:1382px;top:115px" width="14" height="15" viewBox="0 0 14 15"><path d="M3.5 9.5 L7 6 L10.5 9.5" stroke="#c8c8c0" stroke-width="2" fill="none"/></svg>
<div class="a" style="left:1382px;top:998px;width:14px;height:15px;border:1px solid #e6e6dc;border-radius:2px;background:linear-gradient(#fbfbf8,#ecebe4)"></div>
<svg style="left:1382px;top:998px" width="14" height="15" viewBox="0 0 14 15"><path d="M3.5 5.5 L7 9 L10.5 5.5" stroke="#c8c8c0" stroke-width="2" fill="none"/></svg>
<div class="a" style="left:-10px;top:1020px;width:110px;height:32px;border-radius:0 14px 16px 0/0 15px 16px 0;border:1px solid #1f7a1f;border-left:none;background:linear-gradient(#3a9a3a 0,#a8e2a2 2px,#86d282 4px,#5ab857 8px,#46a843 16px,#3f9f3c 24px,#4aa847 29px,#3a9a38 32px);box-shadow:inset -3px 0 3px rgba(180,240,170,.45)"></div>
<svg style="left:9px;top:1025px" width="21" height="19" viewBox="0 0 21 19"><g transform="translate(2.5,1.5)" opacity="0.45" fill="#000"><path d="M1 2 Q4 0 8 1.5 L6.5 8 Q3 6.5 0 8 Z" data-f="#f25022"/><path d="M9.5 2 Q13 3.5 17 1.5 L15.5 8 Q12 10 8 8.5 Z" data-f="#5fbf3a"/><path d="M-0.3 9.5 Q3 8 6.3 9.5 L5 16 Q2 14.5 -1.5 16 Z" data-f="#3a9ff0"/><path d="M7.8 10 Q11.5 11.5 15.3 9.5 L14 16 Q10 18 6.5 16.5 Z" data-f="#ffc20e"/></g><path transform="translate(1.5,0.5)" d="M1 2 Q4 0 8 1.5 L6.5 8 Q3 6.5 0 8 Z" fill="#f25022"/><path transform="translate(1.5,0.5)" d="M9.5 2 Q13 3.5 17 1.5 L15.5 8 Q12 10 8 8.5 Z" fill="#5fbf3a"/><path transform="translate(1.5,0.5)" d="M-0.3 9.5 Q3 8 6.3 9.5 L5 16 Q2 14.5 -1.5 16 Z" fill="#3a9ff0"/><path transform="translate(1.5,0.5)" d="M7.8 10 Q11.5 11.5 15.3 9.5 L14 16 Q10 18 6.5 16.5 Z" fill="#ffc20e"/></svg>
<div class="t" style="left:35px;top:1026.55px;font-size:17px;line-height:17px;color:#fff;font-weight:bold;font-style:italic;transform:scaleX(1.0328);transform-origin:0 0;text-shadow:1px 1px 1px rgba(0,50,0,.7);">Start</div>
<div class="a" style="left:109px;top:1027px;width:2px;height:2px;background:#6c6b88;box-shadow:1px 1px 0 #fff"></div>
<div class="a" style="left:109px;top:1031px;width:2px;height:2px;background:#6c6b88;box-shadow:1px 1px 0 #fff"></div>
<div class="a" style="left:109px;top:1035px;width:2px;height:2px;background:#6c6b88;box-shadow:1px 1px 0 #fff"></div>
<div class="a" style="left:109px;top:1039px;width:2px;height:2px;background:#6c6b88;box-shadow:1px 1px 0 #fff"></div>
<div class="a" style="left:109px;top:1043px;width:2px;height:2px;background:#6c6b88;box-shadow:1px 1px 0 #fff"></div>
<div class="a" style="left:120px;top:1023px;width:158px;height:25px;border-radius:3px;border:1px solid #8f8eab;background:linear-gradient(#ffffff,#f6f6f9 30%,#dedde8 70%,#cbcadb)"></div>
<div class="t" style="left:148px;top:1029.65px;font-size:11px;line-height:11px;color:#000;transform:scaleX(0.9778);transform-origin:0 0;">Posteingang - Micros...</div>
<div class="a" style="left:280px;top:1023px;width:158px;height:25px;border-radius:3px;border:1px solid #8f8eab;background:linear-gradient(#ffffff,#f6f6f9 30%,#dedde8 70%,#cbcadb)"></div>
<div class="t" style="left:307px;top:1029.65px;font-size:11px;line-height:11px;color:#000;transform:scaleX(1.0077);transform-origin:0 0;">FW: WG: Teilnahme v...</div>
<div class="a" style="left:440px;top:1023px;width:158px;height:25px;border-radius:3px;border:1px solid #8f8eab;background:linear-gradient(#ffffff,#f6f6f9 30%,#dedde8 70%,#cbcadb)"></div>
<div class="t" style="left:467px;top:1029.65px;font-size:11px;line-height:11px;color:#000;transform:scaleX(0.9848);transform-origin:0 0;">Rechenzentrum Uni K...</div>
<div class="a" style="left:600px;top:1023px;width:158px;height:25px;border-radius:3px;border:1px solid #8f8eab;background:linear-gradient(#ffffff,#f6f6f9 30%,#dedde8 70%,#cbcadb)"></div>
<div class="t" style="left:628px;top:1029.65px;font-size:11px;line-height:11px;color:#000;transform:scaleX(0.9761);transform-origin:0 0;">Screenshots dotLRN....</div>
<div class="a" style="left:760px;top:1023px;width:158px;height:25px;border-radius:3px;border:1px solid #4c535e;background:linear-gradient(#59616e,#646c79 20%,#7c848f 80%,#858d98)"></div>
<div class="t" style="left:788px;top:1029.65px;font-size:11px;line-height:11px;color:#fff;transform:scaleX(0.9831);transform-origin:0 0;">Kurs-Leistungsübersic...</div>
<svg style="left:128px;top:1027px" width="16" height="16" viewBox="0 0 16 16"><rect x="0" y="0" width="16" height="16" fill="#7b7a10"/><circle cx="8.5" cy="8" r="5" fill="none" stroke="#fff" stroke-width="1.8"/><path d="M8.5 5 V8.5 H11" stroke="#fff" stroke-width="1.4" fill="none"/><rect x="1" y="3" width="3" height="10" fill="#fff"/></svg>
<svg style="left:288px;top:1028px" width="16" height="13" viewBox="0 0 16 13"><rect x="0.5" y="0.5" width="15" height="11" fill="#f5e88a" stroke="#333" stroke-width="1"/><path d="M0.5 0.5 L8 6.5 L15.5 0.5 M0.5 11.5 L6 6 M15.5 11.5 L10 6" stroke="#333" stroke-width="1" fill="none"/></svg>
<svg style="left:449px;top:1027px" width="14" height="16" viewBox="0 0 14 16"><rect x="0.5" y="0.5" width="13" height="15" fill="#fff" stroke="#333" stroke-width="1"/><path d="M3 4 H11 M3 6 H11 M3 8 H11" stroke="#888"/><path d="M5 13 V10 H7 V13 M8 13 V9 H10 V13" fill="#3355cc"/></svg>
<svg style="left:609px;top:1027px" width="15" height="17" viewBox="0 0 15 17"><rect x="0.5" y="0.5" width="14" height="10" fill="#fff" stroke="#333" stroke-width="1"/><path d="M3 7 L6 4 L9 6 L12 3" stroke="#c02020" stroke-width="1.2" fill="none"/><path d="M7.5 10.5 V13 L4 16.5 M7.5 13 L11 16.5" stroke="#333" stroke-width="1.2" fill="none"/></svg>
<svg style="left:767px;top:1027px" width="19" height="18" viewBox="0 0 19 18"><path d="M5.5 0.5 H14 L17.5 4 V15.5 H5.5 Z" fill="#f3f1e6" stroke="#8c8a7c" stroke-width="1"/><path d="M14 0.5 V4 H17.5" fill="#fff" stroke="#8c8a7c" stroke-width="0.8"/><g transform="translate(1,-0.5)"><path d="M1.5 8.8 H11.3 A5 4.6 0 1 0 10.4 12.2" stroke="#1a78e0" stroke-width="2.3" fill="none"/><path d="M4 6.5 A4 3 0 0 1 9 5.5" stroke="#6fd0ff" stroke-width="0.9" fill="none"/><path d="M0.5 12.5 Q3 2.5 13.5 1.5" stroke="#40a8f0" stroke-width="1" fill="none" stroke-dasharray="1.6 0.9"/></g></svg>
<div class="a" style="left:1271px;top:1021px;width:129px;height:29px;border-left:1px solid #6f6e8e;background:linear-gradient(#fdfdfe 0,#f0f0f5 25%,#dcdce8 60%,#c4c3d8 90%,#a9a8c2 100%)"></div>
<div class="a" style="left:1193px;top:1027px;width:2px;height:2px;background:#6c6b88;box-shadow:1px 1px 0 #fff"></div>
<div class="a" style="left:1193px;top:1031px;width:2px;height:2px;background:#6c6b88;box-shadow:1px 1px 0 #fff"></div>
<div class="a" style="left:1193px;top:1035px;width:2px;height:2px;background:#6c6b88;box-shadow:1px 1px 0 #fff"></div>
<div class="a" style="left:1193px;top:1039px;width:2px;height:2px;background:#6c6b88;box-shadow:1px 1px 0 #fff"></div>
<div class="a" style="left:1193px;top:1043px;width:2px;height:2px;background:#6c6b88;box-shadow:1px 1px 0 #fff"></div>
<div class="t" style="left:1201px;top:1029.65px;font-size:11px;line-height:11px;color:#000;transform:scaleX(0.9665);transform-origin:0 0;">Desktop</div>
<svg style="left:1249px;top:1027px" width="9" height="7" viewBox="0 0 9 7"><path d="M0.5 0.5 L3.5 3 L0.5 5.5 M4.5 0.5 L7.5 3 L4.5 5.5" stroke="#000" stroke-width="1.6" fill="none"/></svg>
<svg style="left:1261px;top:1025px" width="20" height="20" viewBox="0 0 20 20"><defs><radialGradient id="gChev" cx="0.35" cy="0.3" r="0.8"><stop offset="0" stop-color="#ffffff"/><stop offset="0.5" stop-color="#b4b3cc"/><stop offset="1" stop-color="#706f92"/></radialGradient></defs><circle cx="10" cy="10" r="9" fill="url(#gChev)" stroke="#3c3c50" stroke-width="1"/><path d="M11.5 5.5 L7.5 10 L11.5 14.5" stroke="#fff" stroke-width="2.6" fill="none"/></svg>
<svg style="left:1282px;top:1026px" width="16" height="18" viewBox="0 0 16 18"><rect x="6" y="0.5" width="9" height="8" fill="#2a2e6a" stroke="#9aa0d8" stroke-width="1"/><path d="M7 8.5 H14 L15 11 H6 Z" fill="#c8cbe8"/><rect x="0.5" y="6" width="9" height="8" fill="#2a2e6a" stroke="#9aa0d8" stroke-width="1"/><path d="M1 14 H9 L10 17 H0 Z" fill="#e0e2f4"/></svg>
<svg style="left:1300px;top:1026px" width="16" height="18" viewBox="0 0 16 18"><circle cx="9.5" cy="11" r="6.5" fill="#1e66d8"/><path d="M6 8 L9 7 L10 11 L7 13 Z M11 9 L14.5 10 L13 14 Z" fill="#3ab43a"/><g transform="translate(0,0) scale(0.55)"><path d="M1 2 Q4 0 8 1.5 L6.5 8 Q3 6.5 0 8 Z" fill="#f25022"/><path d="M9.5 2 Q13 3.5 17 1.5 L15.5 8 Q12 10 8 8.5 Z" fill="#5fbf3a"/><path d="M-0.3 9.5 Q3 8 6.3 9.5 L5 16 Q2 14.5 -1.5 16 Z" fill="#3a9ff0"/><path d="M7.8 10 Q11.5 11.5 15.3 9.5 L14 16 Q10 18 6.5 16.5 Z" fill="#ffc20e"/></g></svg>
<svg style="left:1318px;top:1026px" width="17" height="18" viewBox="0 0 17 18"><rect x="3" y="0.5" width="12" height="10" fill="#fae070" stroke="#7a7aa8" stroke-width="1"/><rect x="0.5" y="8" width="9" height="7" fill="#fff" stroke="#3060c0" stroke-width="1"/><path d="M2 12 H4 L5 10 L6 14 L7 12 H8" stroke="#e02020" stroke-width="0.9" fill="none"/><rect x="10" y="12" width="6" height="4" fill="#b0b0c8"/></svg>
<svg style="left:1337px;top:1026px" width="16" height="17" viewBox="0 0 16 17"><circle cx="8" cy="8.5" r="7" fill="#cfcfcf" stroke="#9c9c9c" stroke-width="1.4"/><path d="M4.5 8 A3.5 3.5 0 0 1 11 6.5 M11.5 9 A3.5 3.5 0 0 1 5 10.5" stroke="#8a8a8a" stroke-width="1.3" fill="none"/></svg>
<div class="t" style="left:1359px;top:1029.65px;font-size:11px;line-height:11px;color:#000;transform:scaleX(1.0108);transform-origin:0 0;">11:27</div>
</body></html>
